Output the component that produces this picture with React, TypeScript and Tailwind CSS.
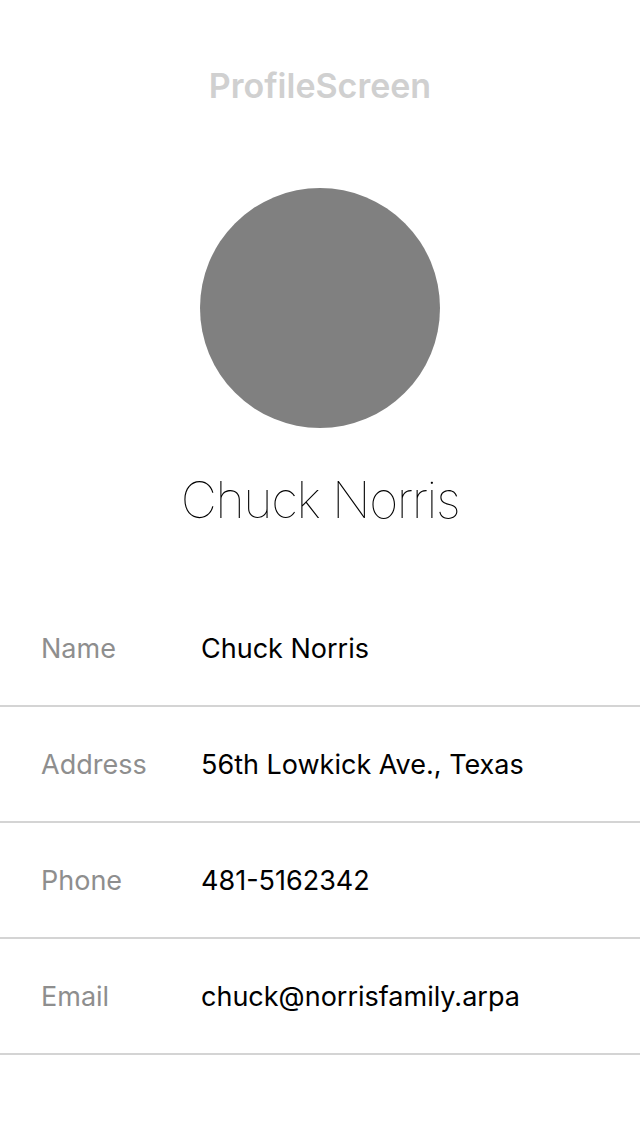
import React from "react";

const rows = [
  ["Name", "Chuck Norris"],
  ["Address", "56th Lowkick Ave., Texas"],
  ["Phone", "481-5162342"],
  ["Email", "chuck@norrisfamily.arpa"],
];

export default function App() {
  return (
    <div className="w-[640px] h-[1136px] bg-white flex flex-col" style={{ fontFamily: "Inter, 'Noto Sans', sans-serif" }}>
      <div className="h-[172px] flex justify-center pt-[64px]">
        <div className="text-[34px] leading-[44px] font-semibold text-[#d0d0d0]">ProfileScreen</div>
      </div>
      <div className="flex justify-center pt-[16px]">
        <div className="w-[240px] h-[240px] rounded-full bg-[#808080]" />
      </div>
      <div className="flex justify-center mt-[42px]">
        <div className="text-[50px] leading-[60px] font-thin text-black tracking-[-1.4px]">Chuck Norris</div>
      </div>
      <div className="mt-[61px] flex flex-col">
        {rows.map(([k, v]) => (
          <div key={k} className="h-[116px] flex items-center pt-[2px] border-b-2 border-[#d4d4d4]">
            <div className="w-[201px] pl-[41px] text-[27px] text-[#8e8e8e]">{k}</div>
            <div className="text-[27px] text-black">{v}</div>
          </div>
        ))}
      </div>
    </div>
  );
}
